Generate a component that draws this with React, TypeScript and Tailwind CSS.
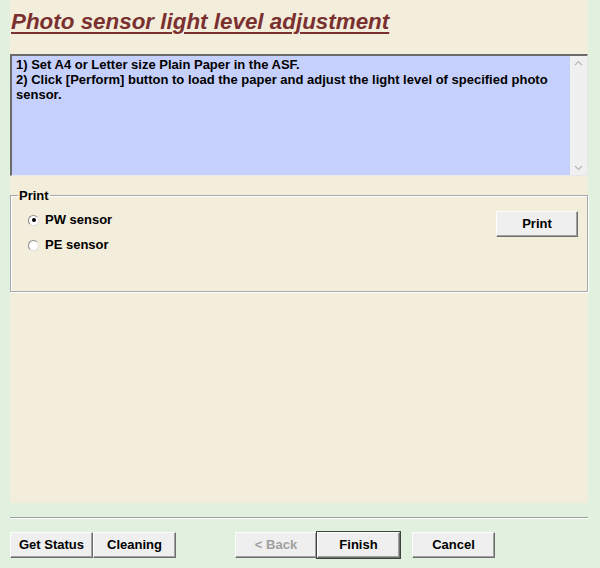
import React from "react";

function WinButton({ label, disabled, isDefault, className = "" }: { label: string; disabled?: boolean; isDefault?: boolean; className?: string }) {
  return (
    <button
      className={
        "h-[26px] bg-[#efefef] text-[13px] font-bold border border-t-[#fdfdfd] border-l-[#fdfdfd] border-r-[#6e6e6e] border-b-[#6e6e6e] shadow-[inset_-1px_-1px_0_#a0a0a0] " +
        (isDefault ? "outline outline-1 outline-[#404040] " : "") +
        (disabled ? "text-[#a0a0a0] " : "text-black ") +
        className
      }
    >
      {label}
    </button>
  );
}

function Radio({ checked, label }: { checked?: boolean; label: string }) {
  return (
    <label className="flex items-center gap-[6px] text-[13px] leading-[16px] font-bold text-black">
      <span className="w-[11px] h-[11px] rounded-full bg-white border border-[#8a8a8a] border-r-[#e0e0e0] border-b-[#e0e0e0] flex items-center justify-center">
        {checked && <span className="w-[4px] h-[4px] rounded-full bg-black" />}
      </span>
      {label}
    </label>
  );
}

export default function App() {
  return (
    <div className="w-[600px] h-[568px] bg-[#e2f0df] font-['Liberation_Sans',Arial,sans-serif] flex flex-col">
      <div className="mx-[10px] w-[578px] h-[503px] bg-[#f3eddb] flex flex-col">
        <h1 className="pl-[1px] pt-[8px] h-[46px] text-[22.4px] leading-[27px] font-bold italic underline decoration-[2px] underline-offset-[3px] text-[#7b3030]">
          Photo sensor light level adjustment
        </h1>
        <div className="mt-[8px] h-[122px] flex border border-t-[#6b6b6b] border-l-[#6b6b6b] border-r-[#e8e8e8] border-b-[#e8e8e8] border-t-2 border-l-2">
          <div className="flex-1 bg-[#c6d0fc] px-[4px] pt-[1px] text-[13px] leading-[15px] font-bold text-black">
            1) Set A4 or Letter size Plain Paper in the ASF.
            <br />
            2) Click [Perform] button to load the paper and adjust the light level of specified photo sensor.
          </div>
          <div className="w-[17px] bg-[#f0f0f0] flex flex-col justify-between items-center py-[4px] text-[#b8b8b8]">
            <svg width="9" height="6" viewBox="0 0 9 6"><path d="M1 5 L4.5 1.5 L8 5" fill="none" stroke="currentColor" strokeWidth="1.2" /></svg>
            <svg width="9" height="6" viewBox="0 0 9 6"><path d="M1 1 L4.5 4.5 L8 1" fill="none" stroke="currentColor" strokeWidth="1.2" /></svg>
          </div>
        </div>
        <fieldset className="mt-[12px] h-[104px] border border-[#a8a8a8] shadow-[inset_1px_1px_0_#ffffff,1px_1px_0_#ffffff] px-[17px] pt-[9px] flex justify-between">
          <legend className="ml-[-10px] px-[1px] text-[13px] font-bold text-black leading-[15px]">Print</legend>
          <div className="flex flex-col gap-[9px]">
            <Radio checked label="PW sensor" />
            <Radio label="PE sensor" />
          </div>
          <WinButton label="Print" className="w-[82px] mr-[-8px] mt-[-1px]" />
        </fieldset>
      </div>
      <div className="mx-[10px] mt-[14px] w-[578px] h-[2px] border-t border-[#9aa39a] border-b border-b-[#ffffff]" />
      <div className="mx-[10px] mt-[13px] flex">
        <WinButton label="Get Status" className="w-[83px]" />
        <WinButton label="Cleaning" className="w-[83px]" />
        <WinButton label="< Back" disabled className="w-[82px] ml-[59px]" />
        <WinButton label="Finish" isDefault className="w-[83px]" />
        <WinButton label="Cancel" className="w-[83px] ml-[12px]" />
      </div>
    </div>
  );
}
